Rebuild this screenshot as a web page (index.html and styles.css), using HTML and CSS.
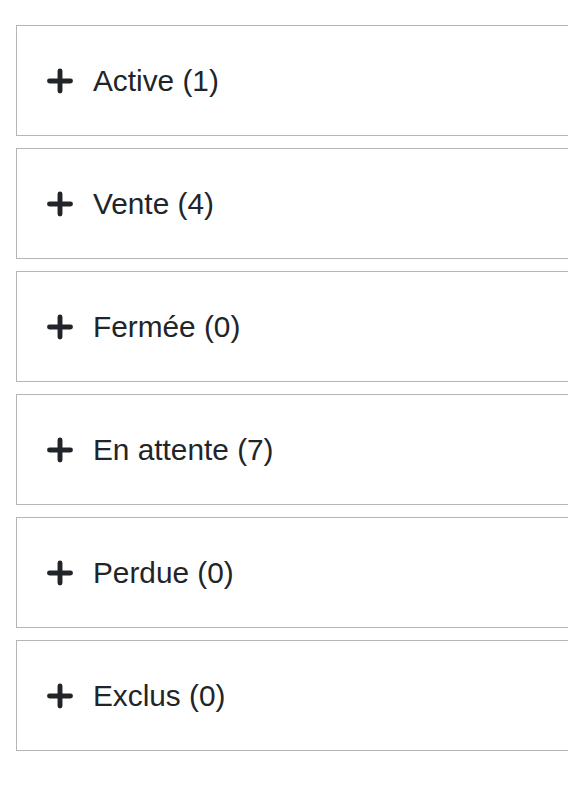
FILE: index.html
```html
<!DOCTYPE html>
<html lang="fr">
<head>
<meta charset="utf-8">
<link rel="stylesheet" href="styles.css">
</head>
<body>
<div class="list">
  <div class="item"><svg class="plus" viewBox="0 0 28 26"><path d="M14 3V23M3.5 13H24.5"/></svg><span class="label">Active (1)</span></div>
  <div class="item"><svg class="plus" viewBox="0 0 28 26"><path d="M14 3V23M3.5 13H24.5"/></svg><span class="label">Vente (4)</span></div>
  <div class="item"><svg class="plus" viewBox="0 0 28 26"><path d="M14 3V23M3.5 13H24.5"/></svg><span class="label">Fermée (0)</span></div>
  <div class="item"><svg class="plus" viewBox="0 0 28 26"><path d="M14 3V23M3.5 13H24.5"/></svg><span class="label">En attente (7)</span></div>
  <div class="item"><svg class="plus" viewBox="0 0 28 26"><path d="M14 3V23M3.5 13H24.5"/></svg><span class="label">Perdue (0)</span></div>
  <div class="item"><svg class="plus" viewBox="0 0 28 26"><path d="M14 3V23M3.5 13H24.5"/></svg><span class="label">Exclus (0)</span></div>
</div>
</body>
</html>
```
FILE: styles.css
```css
html, body {
  margin: 0;
  padding: 0;
  background: #ffffff;
}
body {
  font-family: "Liberation Sans", Arial, sans-serif;
  color: #212529;
}
.list {
  display: flex;
  flex-direction: column;
  gap: 12px;
  padding: 25px 0 0 16px;
  width: 552px;
  overflow: hidden;
}
.item {
  width: 640px;
  flex: none;
  height: 109px;
  border: 1px solid #b5b5b5;
  display: flex;
  align-items: center;
  padding-left: 29px;
  box-sizing: content-box;
}
.plus {
  width: 28px;
  height: 26px;
  flex: none;
}
.plus path {
  stroke: #212529;
  stroke-width: 4.9;
  stroke-linecap: round;
  fill: none;
}
.label {
  font-size: 29.8px;
  margin-left: 19px;
  line-height: 1;
  padding-top: 1px;
}
```
